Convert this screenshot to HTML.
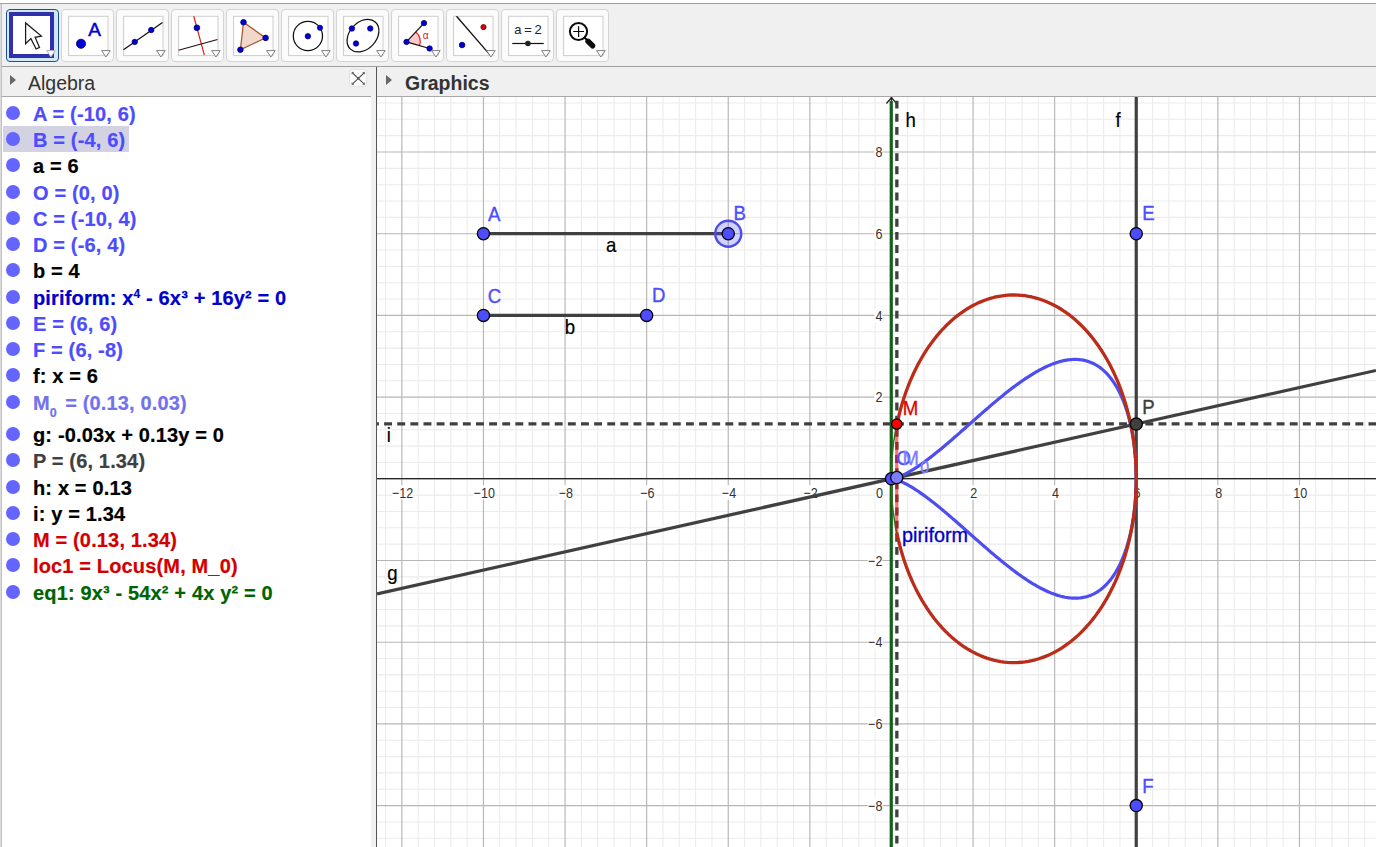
<!DOCTYPE html>
<html><head><meta charset="utf-8"><title>GeoGebra</title>
<style>
html,body{margin:0;padding:0;background:#fff;}
body{width:1376px;height:847px;position:relative;overflow:hidden;font-family:"Liberation Sans",sans-serif;}
.abs{position:absolute;}
#toolbar{left:0;top:3px;width:1376px;height:63px;background:#f0f0f0;border-top:1px solid #a0a0a0;box-sizing:border-box;}
#hdr{left:0;top:66px;width:1376px;height:31px;background:#f0f0f0;border-top:1px solid #a0a0a0;border-bottom:1px solid #a8a8a8;box-sizing:border-box;}
.tbtn{position:absolute;top:9px;width:53px;height:53px;box-sizing:border-box;border:1px solid #d4d4d4;border-radius:4px;background:#fbfbfb;}
.tbtn svg{position:absolute;left:-1px;top:-1px;}
.tbtn.sel{border-color:#205088;background:#cfe8fc;}
#alg{left:0;top:97px;width:371px;height:750px;background:#fff;}
#leftedge{left:0;top:4px;width:2px;height:843px;background:linear-gradient(to right,#dadada 0,#dadada 1px,#c2c2c2 1px,#c2c2c2 2px);}
#split{left:371px;top:67px;width:5px;height:780px;background:#f0f0f0;}
#splitline{left:376px;top:67px;width:1px;height:780px;background:#555;}
.row{position:absolute;left:3px;height:26px;line-height:26px;font-weight:bold;font-size:20px;letter-spacing:0.15px;-webkit-text-stroke:0.2px;white-space:nowrap;padding-right:3.6px;}
.row i{position:absolute;left:3px;top:6px;width:14px;height:14px;border-radius:50%;background:#6464ff;}
.row span{margin-left:30px;position:relative;top:0.6px;}
.row.sel{background:#d2d2e2;}
.row sup{font-size:12px;vertical-align:baseline;position:relative;top:-7px;}
.row sub{font-size:13px;vertical-align:baseline;position:relative;top:7.5px;font-weight:bold;font-size:12.5px;margin-right:2.5px;}
.ttl{position:absolute;top:71px;font-size:19.5px;line-height:24px;color:#333;}
.arrow{position:absolute;width:0;height:0;border-left:6px solid #686868;border-top:5.75px solid transparent;border-bottom:5.75px solid transparent;}
#close{left:349px;top:69px;width:17px;height:17px;border:1px solid #c8c8c8;border-radius:3px;background:#fafafa;box-sizing:border-box;}
</style></head><body>
<div id="toolbar" class="abs"></div>
<div class="tbtn sel" style="left:6px"><svg width="52" height="52" viewBox="0 0 52 52"><rect x="5" y="5" width="41" height="42" fill="#fff" stroke="#3030aa" stroke-width="4"/><path d="M19.6 13.9L19.6 34.8L24.9 29.6L30.1 40L33.5 38.4L29.1 28.3L35.4 27.1Z" fill="#fff" stroke="#1c1c1c" stroke-width="1.25" stroke-linejoin="miter"/><path d="M40.6 41.6h8.6l-4.3 6.4z" fill="#fff" stroke="#b0b0c8" stroke-width="1"/></svg></div>
<div class="tbtn" style="left:61px"><svg width="52" height="52" viewBox="0 0 52 52"><rect x="7.6" y="7.3" width="39.4" height="39.3" fill="#fff" stroke="#cdcdcd" stroke-width="1"/><circle cx="20" cy="34.75" r="4.6" fill="#0000d6" stroke="#000070" stroke-width="0.8"/><text x="27.3" y="27" font-size="19" fill="#0000d6" stroke="#0000d6" stroke-width="0.5" font-family="Liberation Sans, sans-serif">A</text><path d="M40.6 41.6h8.6l-4.3 6.4z" fill="#fff" stroke="#808080" stroke-width="1"/></svg></div>
<div class="tbtn" style="left:116px"><svg width="52" height="52" viewBox="0 0 52 52"><rect x="7.6" y="7.3" width="39.4" height="39.3" fill="#fff" stroke="#cdcdcd" stroke-width="1"/><path d="M7.5 40.75L46.5 13.5" stroke="#111" stroke-width="1.25"/><circle cx="18.75" cy="32.9" r="2.7" fill="#0000d6" stroke="#000070" stroke-width="0.8"/><circle cx="35.25" cy="21" r="2.7" fill="#0000d6" stroke="#000070" stroke-width="0.8"/><path d="M40.6 41.6h8.6l-4.3 6.4z" fill="#fff" stroke="#808080" stroke-width="1"/></svg></div>
<div class="tbtn" style="left:171px"><svg width="52" height="52" viewBox="0 0 52 52"><rect x="7.6" y="7.3" width="39.4" height="39.3" fill="#fff" stroke="#cdcdcd" stroke-width="1"/><path d="M22.75 7.25L33.4 46.2" stroke="#e02020" stroke-width="1.2"/><path d="M7.5 41.25L46.5 30.5" stroke="#2a1010" stroke-width="1.25"/><circle cx="25.9" cy="18.75" r="2.85" fill="#0000d6" stroke="#000070" stroke-width="0.8"/><path d="M40.6 41.6h8.6l-4.3 6.4z" fill="#fff" stroke="#808080" stroke-width="1"/></svg></div>
<div class="tbtn" style="left:226px"><svg width="52" height="52" viewBox="0 0 52 52"><rect x="7.6" y="7.3" width="39.4" height="39.3" fill="#fff" stroke="#cdcdcd" stroke-width="1"/><path d="M17.5 13.25L39.6 28.9L14.4 40.75Z" fill="#f0d8cc" stroke="#a85020" stroke-width="1.2"/><circle cx="17.5" cy="13.25" r="2.8000000000000003" fill="#0000d6" stroke="#000070" stroke-width="0.8"/><circle cx="39.6" cy="28.9" r="2.8000000000000003" fill="#0000d6" stroke="#000070" stroke-width="0.8"/><circle cx="14.4" cy="40.75" r="2.8000000000000003" fill="#0000d6" stroke="#000070" stroke-width="0.8"/><path d="M40.6 41.6h8.6l-4.3 6.4z" fill="#fff" stroke="#808080" stroke-width="1"/></svg></div>
<div class="tbtn" style="left:281px"><svg width="52" height="52" viewBox="0 0 52 52"><rect x="7.6" y="7.3" width="39.4" height="39.3" fill="#fff" stroke="#cdcdcd" stroke-width="1"/><circle cx="26.9" cy="27" r="14.6" fill="none" stroke="#111" stroke-width="1.25"/><circle cx="26.9" cy="27.25" r="2.7" fill="#0000d6" stroke="#000070" stroke-width="0.8"/><circle cx="39" cy="18.75" r="2.6" fill="#0000d6" stroke="#000070" stroke-width="0.8"/><path d="M40.6 41.6h8.6l-4.3 6.4z" fill="#fff" stroke="#808080" stroke-width="1"/></svg></div>
<div class="tbtn" style="left:336px"><svg width="52" height="52" viewBox="0 0 52 52"><rect x="7.6" y="7.3" width="39.4" height="39.3" fill="#fff" stroke="#cdcdcd" stroke-width="1"/><ellipse cx="27" cy="26.7" rx="18.4" ry="13.4" transform="rotate(-47 27 26.7)" fill="none" stroke="#111" stroke-width="1.25"/><circle cx="15.9" cy="19.5" r="2.7" fill="#0000d6" stroke="#000070" stroke-width="0.8"/><circle cx="34.25" cy="19.5" r="2.7" fill="#0000d6" stroke="#000070" stroke-width="0.8"/><circle cx="20" cy="34.5" r="2.7" fill="#0000d6" stroke="#000070" stroke-width="0.8"/><path d="M40.6 41.6h8.6l-4.3 6.4z" fill="#fff" stroke="#808080" stroke-width="1"/></svg></div>
<div class="tbtn" style="left:391px"><svg width="52" height="52" viewBox="0 0 52 52"><rect x="7.6" y="7.3" width="39.4" height="39.3" fill="#fff" stroke="#cdcdcd" stroke-width="1"/><path d="M15.5 32.9L24.8 22.9A13.6 13.6 0 0 1 28.6 36.7Z" fill="#ffc8c8" stroke="none"/><path d="M24.8 22.9A13.6 13.6 0 0 1 28.6 36.7" fill="none" stroke="#e02020" stroke-width="1.2"/><path d="M33 14.1L15.5 32.9L38.6 39.5" fill="none" stroke="#111" stroke-width="1.25"/><circle cx="33" cy="14.1" r="2.7" fill="#0000d6" stroke="#000070" stroke-width="0.8"/><circle cx="15.5" cy="32.9" r="2.7" fill="#0000d6" stroke="#000070" stroke-width="0.8"/><circle cx="38.6" cy="39.5" r="2.7" fill="#0000d6" stroke="#000070" stroke-width="0.8"/><text x="31.8" y="30.4" font-size="10.3" fill="#e02020" font-family="Liberation Sans, sans-serif">α</text><path d="M40.6 41.6h8.6l-4.3 6.4z" fill="#fff" stroke="#808080" stroke-width="1"/></svg></div>
<div class="tbtn" style="left:446px"><svg width="52" height="52" viewBox="0 0 52 52"><rect x="7.6" y="7.3" width="39.4" height="39.3" fill="#fff" stroke="#cdcdcd" stroke-width="1"/><path d="M10.5 7.25L44.6 46.6" stroke="#111" stroke-width="1.3"/><circle cx="37.5" cy="18.1" r="2.6" fill="#e00000" stroke="#600000" stroke-width="0.8"/><circle cx="16.1" cy="36" r="2.8000000000000003" fill="#0000d6" stroke="#000070" stroke-width="0.8"/><path d="M40.6 41.6h8.6l-4.3 6.4z" fill="#fff" stroke="#808080" stroke-width="1"/></svg></div>
<div class="tbtn" style="left:501px"><svg width="52" height="52" viewBox="0 0 52 52"><rect x="7.6" y="7.3" width="39.4" height="39.3" fill="#fff" stroke="#cdcdcd" stroke-width="1"/><text x="13.2" y="25" font-size="13" fill="#222" word-spacing="-0.9" font-family="Liberation Sans, sans-serif">a = 2</text><path d="M11.25 34.5H42.75" stroke="#111" stroke-width="1.2"/><circle cx="26.9" cy="34.5" r="2.8" fill="#222"/><path d="M40.6 41.6h8.6l-4.3 6.4z" fill="#fff" stroke="#808080" stroke-width="1"/></svg></div>
<div class="tbtn" style="left:556px"><svg width="52" height="52" viewBox="0 0 52 52"><rect x="7.6" y="7.3" width="39.4" height="39.3" fill="#fff" stroke="#cdcdcd" stroke-width="1"/><circle cx="22.5" cy="22.5" r="8.6" fill="none" stroke="#0a0a0a" stroke-width="2"/><path d="M17.2 22.5h10.8M22.6 17.2v10.7" stroke="#0a0a0a" stroke-width="1.2"/><path d="M28.5 28.5L33 33" stroke="#0a0a0a" stroke-width="2"/><path d="M32 32.3L36.6 36.8" stroke="#0a0a0a" stroke-width="5.4" stroke-linecap="round"/><path d="M40.6 41.6h8.6l-4.3 6.4z" fill="#fff" stroke="#808080" stroke-width="1"/></svg></div>
<div id="hdr" class="abs"></div>
<div class="arrow" style="left:10px;top:75px"></div>
<div class="ttl" style="left:28px">Algebra</div>
<svg class="abs" style="left:348px;top:68px" width="20" height="20" viewBox="0 0 20 20"><rect x="1.6" y="1.4" width="17" height="17" rx="3.2" fill="#fcfcfc" stroke="#dcdcdc" stroke-width="0.8"/><path d="M4.1 4.5L16.5 16.3M16.5 4.5L4.1 16.3" stroke="#555" stroke-width="1.1"/><path d="M4 6.2V4.4H5.9M14.7 4.4H16.6V6.2M4 14.6V16.4H5.9M14.7 16.4H16.6V14.6" stroke="#666" stroke-width="0.9" fill="none"/><rect x="9.2" y="9.3" width="2.2" height="2.2" fill="#555"/></svg>
<div class="arrow" style="left:386px;top:75.3px;border-top-width:5.8px;border-bottom-width:5.8px"></div>
<div class="ttl" style="left:405px;font-weight:bold">Graphics</div>
<div id="alg" class="abs"></div>
<div class="row" style="top:100px;color:#4d4dff"><i></i><span>A = (-10, 6)</span></div>
<div class="row sel" style="top:126px;color:#4d4dff"><i></i><span>B = (-4, 6)</span></div>
<div class="row" style="top:152px;color:#000"><i></i><span>a = 6</span></div>
<div class="row" style="top:179px;color:#4d4dff"><i></i><span>O = (0, 0)</span></div>
<div class="row" style="top:205px;color:#4d4dff"><i></i><span>C = (-10, 4)</span></div>
<div class="row" style="top:231px;color:#4d4dff"><i></i><span>D = (-6, 4)</span></div>
<div class="row" style="top:257px;color:#000"><i></i><span>b = 4</span></div>
<div class="row" style="top:284px;color:#0000cc"><i></i><span>piriform: x<sup>4</sup> - 6x³ + 16y² = 0</span></div>
<div class="row" style="top:310px;color:#4d4dff"><i></i><span>E = (6, 6)</span></div>
<div class="row" style="top:336px;color:#4d4dff"><i></i><span>F = (6, -8)</span></div>
<div class="row" style="top:362px;color:#000"><i></i><span>f: x = 6</span></div>
<div class="row" style="top:389px;color:#7272f0"><i></i><span>M<sub>0</sub> = (0.13, 0.03)</span></div>
<div class="row" style="top:421px;color:#000"><i></i><span>g: -0.03x + 0.13y = 0</span></div>
<div class="row" style="top:447px;color:#404040"><i></i><span>P = (6, 1.34)</span></div>
<div class="row" style="top:474px;color:#000"><i></i><span>h: x = 0.13</span></div>
<div class="row" style="top:500px;color:#000"><i></i><span>i: y = 1.34</span></div>
<div class="row" style="top:526px;color:#d20000"><i></i><span>M = (0.13, 1.34)</span></div>
<div class="row" style="top:552px;color:#d20000"><i></i><span>loc1 = Locus(M, M_0)</span></div>
<div class="row" style="top:579px;color:#006400"><i></i><span>eq1: 9x³ - 54x² + 4x y² = 0</span></div>
<div id="split" class="abs"></div>
<div id="splitline" class="abs"></div>
<div id="leftedge" class="abs"></div>
<svg width="999" height="750" viewBox="0 0 999 750" style="position:absolute;left:377px;top:97px" font-family="Liberation Sans, sans-serif"><path d="M8.53 0V750M41.17 0V750M57.49 0V750M73.81 0V750M90.13 0V750M122.77 0V750M139.09 0V750M155.41 0V750M171.73 0V750M204.37 0V750M220.69 0V750M237.01 0V750M253.33 0V750M285.97 0V750M302.29 0V750M318.61 0V750M334.93 0V750M367.57 0V750M383.89 0V750M400.21 0V750M416.53 0V750M449.17 0V750M465.49 0V750M481.81 0V750M498.13 0V750M530.77 0V750M547.09 0V750M563.41 0V750M579.73 0V750M612.37 0V750M628.69 0V750M645.01 0V750M661.33 0V750M693.97 0V750M710.29 0V750M726.61 0V750M742.93 0V750M775.57 0V750M791.89 0V750M808.21 0V750M824.53 0V750M857.17 0V750M873.49 0V750M889.81 0V750M906.13 0V750M938.77 0V750M955.09 0V750M971.41 0V750M987.73 0V750M0 5.98H999M0 22.32H999M0 38.66H999M0 71.34H999M0 87.68H999M0 104.02H999M0 120.36H999M0 153.04H999M0 169.38H999M0 185.72H999M0 202.06H999M0 234.74H999M0 251.08H999M0 267.42H999M0 283.76H999M0 316.44H999M0 332.78H999M0 349.12H999M0 365.46H999M0 398.14H999M0 414.48H999M0 430.82H999M0 447.16H999M0 479.84H999M0 496.18H999M0 512.52H999M0 528.86H999M0 561.54H999M0 577.88H999M0 594.22H999M0 610.56H999M0 643.24H999M0 659.58H999M0 675.92H999M0 692.26H999M0 724.94H999M0 741.28H999" stroke="#ececec" stroke-width="1.1" fill="none"/>
<path d="M24.85 0V750M106.45 0V750M188.05 0V750M269.65 0V750M351.25 0V750M432.85 0V750M514.45 0V750M596.05 0V750M677.65 0V750M759.25 0V750M840.85 0V750M922.45 0V750M0 55H999M0 136.7H999M0 218.4H999M0 300.1H999M0 381.8H999M0 463.5H999M0 545.2H999M0 626.9H999M0 708.6H999" stroke="#b6b6b6" stroke-width="1.15" fill="none"/>
<path d="M0 381.6H999" stroke="#252525" stroke-width="1.3" fill="none"/>
<path d="M514.45 0V750" stroke="#252525" stroke-width="1.3" fill="none"/>
<path d="M509.45 6.5L514.45 0.5L519.45 6.5" stroke="#252525" stroke-width="1.3" fill="none"/>
<g font-size="14.8" fill="#333">
<rect x="15" y="388.2" width="21.3" height="14.5" fill="#fff"/>
<text x="30.18" y="400.7" text-anchor="middle" transform="scale(0.85 1)">−12</text>
<rect x="96.6" y="388.2" width="21.3" height="14.5" fill="#fff"/>
<text x="126.18" y="400.7" text-anchor="middle" transform="scale(0.85 1)">−10</text>
<rect x="181.5" y="388.2" width="14.7" height="14.5" fill="#fff"/>
<text x="222.18" y="400.7" text-anchor="middle" transform="scale(0.85 1)">−8</text>
<rect x="263.1" y="388.2" width="14.7" height="14.5" fill="#fff"/>
<text x="318.18" y="400.7" text-anchor="middle" transform="scale(0.85 1)">−6</text>
<rect x="344.7" y="388.2" width="14.7" height="14.5" fill="#fff"/>
<text x="414.18" y="400.7" text-anchor="middle" transform="scale(0.85 1)">−4</text>
<rect x="426.3" y="388.2" width="14.7" height="14.5" fill="#fff"/>
<text x="510.18" y="400.7" text-anchor="middle" transform="scale(0.85 1)">−2</text>
<rect x="592.8" y="388.2" width="8.1" height="14.5" fill="#fff"/>
<text x="702.18" y="400.7" text-anchor="middle" transform="scale(0.85 1)">2</text>
<rect x="674.4" y="388.2" width="8.1" height="14.5" fill="#fff"/>
<text x="798.18" y="400.7" text-anchor="middle" transform="scale(0.85 1)">4</text>
<rect x="756" y="388.2" width="8.1" height="14.5" fill="#fff"/>
<text x="894.18" y="400.7" text-anchor="middle" transform="scale(0.85 1)">6</text>
<rect x="837.6" y="388.2" width="8.1" height="14.5" fill="#fff"/>
<text x="990.18" y="400.7" text-anchor="middle" transform="scale(0.85 1)">8</text>
<rect x="915.9" y="388.2" width="14.7" height="14.5" fill="#fff"/>
<text x="1086.18" y="400.7" text-anchor="middle" transform="scale(0.85 1)">10</text>
<rect x="498.4" y="388.2" width="8.1" height="14.5" fill="#fff"/>
<text x="591.12" y="400.7" text-anchor="middle" transform="scale(0.85 1)">0</text>
<rect x="490.75" y="701.4" width="14.7" height="14.5" fill="#fff"/>
<text x="594.65" y="713.9" text-anchor="end" transform="scale(0.85 1)">−8</text>
<rect x="490.75" y="619.7" width="14.7" height="14.5" fill="#fff"/>
<text x="594.65" y="632.2" text-anchor="end" transform="scale(0.85 1)">−6</text>
<rect x="490.75" y="538" width="14.7" height="14.5" fill="#fff"/>
<text x="594.65" y="550.5" text-anchor="end" transform="scale(0.85 1)">−4</text>
<rect x="490.75" y="456.3" width="14.7" height="14.5" fill="#fff"/>
<text x="594.65" y="468.8" text-anchor="end" transform="scale(0.85 1)">−2</text>
<rect x="497.35" y="292.9" width="8.1" height="14.5" fill="#fff"/>
<text x="594.65" y="305.4" text-anchor="end" transform="scale(0.85 1)">2</text>
<rect x="497.35" y="211.2" width="8.1" height="14.5" fill="#fff"/>
<text x="594.65" y="223.7" text-anchor="end" transform="scale(0.85 1)">4</text>
<rect x="497.35" y="129.5" width="8.1" height="14.5" fill="#fff"/>
<text x="594.65" y="142" text-anchor="end" transform="scale(0.85 1)">6</text>
<rect x="497.35" y="47.8" width="8.1" height="14.5" fill="#fff"/>
<text x="594.65" y="60.3" text-anchor="end" transform="scale(0.85 1)">8</text>
</g>
<path d="M106.45 136.7H351.25 M106.45 218.4H269.65" stroke="#404040" stroke-width="3.2" fill="none"/>
<path d="M759.25 0V750" stroke="#404040" stroke-width="3.2" fill="none"/>
<path d="M0 496.83L999 273.45" stroke="#404040" stroke-width="3.2" fill="none"/>
<path d="M519.85 0V750" stroke="#404040" stroke-width="3.3" stroke-dasharray="7.9 5.225" stroke-dashoffset="9.42" fill="none"/>
<path d="M0 326.86H999" stroke="#404040" stroke-width="3.3" stroke-dasharray="7.9 5.225" stroke-dashoffset="6" fill="none"/>
<path d="M514.45 381.8L514.46 381.8L514.49 381.8L514.54 381.8L514.62 381.79L514.71 381.79L514.83 381.78L514.96 381.76L515.12 381.75L515.3 381.73L515.5 381.7L515.72 381.66L515.96 381.62L516.22 381.58L516.5 381.52L516.8 381.46L517.12 381.38L517.47 381.3L517.83 381.21L518.22 381.1L518.62 380.99L519.05 380.86L519.49 380.73L519.96 380.57L520.44 380.41L520.95 380.23L521.47 380.04L522.02 379.83L522.58 379.61L523.16 379.38L523.77 379.12L524.39 378.85L525.03 378.57L525.69 378.27L526.37 377.95L527.07 377.61L527.79 377.25L528.53 376.88L529.28 376.49L530.06 376.07L530.85 375.64L531.66 375.19L532.49 374.72L533.33 374.23L534.2 373.72L535.08 373.19L535.98 372.64L536.89 372.07L537.83 371.48L538.78 370.87L539.74 370.24L540.73 369.58L541.73 368.91L542.74 368.21L543.78 367.5L544.82 366.76L545.89 366L546.97 365.22L548.06 364.42L549.17 363.6L550.3 362.76L551.44 361.9L552.6 361.02L553.76 360.12L554.95 359.2L556.15 358.26L557.36 357.3L558.58 356.32L559.82 355.32L561.07 354.31L562.34 353.27L563.62 352.22L564.91 351.15L566.21 350.06L567.52 348.96L568.85 347.84L570.19 346.7L571.54 345.55L572.9 344.38L574.27 343.2L575.65 342L577.04 340.79L578.45 339.57L579.86 338.33L581.28 337.08L582.71 335.83L584.16 334.56L585.61 333.28L587.07 331.99L588.53 330.69L590.01 329.38L591.49 328.06L592.99 326.74L594.49 325.41L595.99 324.08L597.51 322.74L599.03 321.4L600.55 320.05L602.09 318.7L603.63 317.35L605.17 316L606.72 314.64L608.28 313.29L609.84 311.94L611.4 310.59L612.97 309.24L614.54 307.9L616.12 306.56L617.7 305.22L619.29 303.89L620.87 302.57L622.46 301.25L624.06 299.95L625.65 298.65L627.25 297.36L628.84 296.08L630.44 294.82L632.04 293.56L633.65 292.32L635.25 291.1L636.85 289.89L638.45 288.69L640.05 287.51L641.66 286.35L643.26 285.21L644.86 284.09L646.45 282.98L648.05 281.9L649.64 280.84L651.24 279.8L652.83 278.78L654.41 277.79L656 276.82L657.58 275.87L659.16 274.96L660.73 274.07L662.3 273.2L663.86 272.37L665.42 271.56L666.98 270.79L668.53 270.04L670.07 269.33L671.61 268.64L673.15 267.99L674.67 267.37L676.19 266.79L677.71 266.24L679.21 265.72L680.71 265.24L682.21 264.8L683.69 264.39L685.17 264.02L686.63 263.68L688.09 263.38L689.54 263.13L690.99 262.91L692.42 262.73L693.84 262.58L695.25 262.48L696.66 262.42L698.05 262.4L699.43 262.42L700.8 262.48L702.16 262.59L703.51 262.73L704.85 262.92L706.18 263.15L707.49 263.42L708.79 263.73L710.08 264.09L711.36 264.49L712.63 264.93L713.88 265.42L715.12 265.95L716.34 266.52L717.55 267.13L718.75 267.79L719.94 268.49L721.1 269.24L722.26 270.02L723.4 270.85L724.53 271.72L725.64 272.64L726.73 273.6L727.81 274.59L728.88 275.63L729.92 276.72L730.96 277.84L731.97 279.01L732.97 280.21L733.96 281.46L734.92 282.74L735.87 284.07L736.81 285.43L737.72 286.84L738.62 288.28L739.5 289.76L740.37 291.27L741.21 292.83L742.04 294.42L742.85 296.04L743.64 297.71L744.42 299.4L745.17 301.13L745.91 302.89L746.63 304.69L747.33 306.52L748.01 308.37L748.67 310.26L749.31 312.18L749.93 314.13L750.54 316.11L751.12 318.11L751.68 320.14L752.23 322.2L752.75 324.28L753.26 326.39L753.74 328.51L754.21 330.67L754.65 332.84L755.08 335.03L755.48 337.25L755.87 339.48L756.23 341.73L756.58 344L756.9 346.28L757.2 348.58L757.48 350.89L757.74 353.22L757.98 355.56L758.2 357.91L758.4 360.27L758.58 362.64L758.74 365.01L758.87 367.4L758.99 369.79L759.08 372.19L759.16 374.59L759.21 376.99L759.24 379.39L759.25 381.8L759.25 381.8L759.24 384.21L759.21 386.61L759.16 389.01L759.08 391.41L758.99 393.81L758.87 396.2L758.74 398.59L758.58 400.96L758.4 403.33L758.2 405.69L757.98 408.04L757.74 410.38L757.48 412.71L757.2 415.02L756.9 417.32L756.58 419.6L756.23 421.87L755.87 424.12L755.48 426.35L755.08 428.57L754.65 430.76L754.21 432.93L753.74 435.09L753.26 437.21L752.75 439.32L752.23 441.4L751.68 443.46L751.12 445.49L750.54 447.49L749.93 449.47L749.31 451.42L748.67 453.34L748.01 455.23L747.33 457.08L746.63 458.91L745.91 460.71L745.17 462.47L744.42 464.2L743.64 465.89L742.85 467.56L742.04 469.18L741.21 470.77L740.37 472.33L739.5 473.84L738.62 475.32L737.72 476.76L736.81 478.17L735.87 479.53L734.92 480.86L733.96 482.14L732.97 483.39L731.97 484.59L730.96 485.76L729.92 486.88L728.88 487.97L727.81 489.01L726.73 490L725.64 490.96L724.53 491.88L723.4 492.75L722.26 493.58L721.1 494.36L719.94 495.11L718.75 495.81L717.55 496.47L716.34 497.08L715.12 497.65L713.88 498.18L712.63 498.67L711.36 499.11L710.08 499.51L708.79 499.87L707.49 500.18L706.18 500.45L704.85 500.68L703.51 500.87L702.16 501.01L700.8 501.12L699.43 501.18L698.05 501.2L696.66 501.18L695.25 501.12L693.84 501.02L692.42 500.87L690.99 500.69L689.54 500.47L688.09 500.22L686.63 499.92L685.17 499.58L683.69 499.21L682.21 498.8L680.71 498.36L679.21 497.88L677.71 497.36L676.19 496.81L674.67 496.23L673.15 495.61L671.61 494.96L670.07 494.27L668.53 493.56L666.98 492.81L665.42 492.04L663.86 491.23L662.3 490.4L660.73 489.53L659.16 488.64L657.58 487.73L656 486.78L654.41 485.81L652.83 484.82L651.24 483.8L649.64 482.76L648.05 481.7L646.45 480.62L644.86 479.51L643.26 478.39L641.66 477.25L640.05 476.09L638.45 474.91L636.85 473.71L635.25 472.5L633.65 471.28L632.04 470.04L630.44 468.78L628.84 467.52L627.25 466.24L625.65 464.95L624.06 463.65L622.46 462.35L620.87 461.03L619.29 459.71L617.7 458.38L616.12 457.04L614.54 455.7L612.97 454.36L611.4 453.01L609.84 451.66L608.28 450.31L606.72 448.96L605.17 447.6L603.63 446.25L602.09 444.9L600.55 443.55L599.03 442.2L597.51 440.86L595.99 439.52L594.49 438.19L592.99 436.86L591.49 435.54L590.01 434.22L588.53 432.91L587.07 431.61L585.61 430.32L584.16 429.04L582.71 427.77L581.28 426.52L579.86 425.27L578.45 424.03L577.04 422.81L575.65 421.6L574.27 420.4L572.9 419.22L571.54 418.05L570.19 416.9L568.85 415.76L567.52 414.64L566.21 413.54L564.91 412.45L563.62 411.38L562.34 410.33L561.07 409.29L559.82 408.28L558.58 407.28L557.36 406.3L556.15 405.34L554.95 404.4L553.76 403.48L552.6 402.58L551.44 401.7L550.3 400.84L549.17 400L548.06 399.18L546.97 398.38L545.89 397.6L544.82 396.84L543.78 396.1L542.74 395.39L541.73 394.69L540.73 394.02L539.74 393.36L538.78 392.73L537.83 392.12L536.89 391.53L535.98 390.96L535.08 390.41L534.2 389.88L533.33 389.37L532.49 388.88L531.66 388.41L530.85 387.96L530.06 387.53L529.28 387.11L528.53 386.72L527.79 386.35L527.07 385.99L526.37 385.65L525.69 385.33L525.03 385.03L524.39 384.75L523.77 384.48L523.16 384.22L522.58 383.99L522.02 383.77L521.47 383.56L520.95 383.37L520.44 383.19L519.96 383.03L519.49 382.87L519.05 382.74L518.62 382.61L518.22 382.5L517.83 382.39L517.47 382.3L517.12 382.22L516.8 382.14L516.5 382.08L516.22 382.02L515.96 381.98L515.72 381.94L515.5 381.9L515.3 381.87L515.12 381.85L514.96 381.84L514.83 381.82L514.71 381.81L514.62 381.81L514.54 381.8L514.49 381.8L514.46 381.8L514.45 381.8Z" stroke="#4d4df0" stroke-width="3.2" fill="none" stroke-linejoin="round"/>
<path d="M514.25 4V750" stroke="#14601a" stroke-width="3.2" fill="none"/>
<ellipse cx="636.55" cy="381.8" rx="122.4" ry="183.83" stroke="#3a6a1c" stroke-width="1.5" fill="none"/>
<path d="M519.75 328.29L520.81 323.3L521.97 318.37L523.22 313.48L524.56 308.65L525.99 303.88L527.51 299.18L529.12 294.54L530.82 289.97L532.6 285.47L534.47 281.06L536.42 276.72L538.45 272.47L540.56 268.31L542.75 264.24L545.02 260.27L547.36 256.39L549.77 252.62L552.25 248.95L554.8 245.39L557.42 241.94L560.1 238.6L562.85 235.38L565.65 232.27L568.52 229.29L571.43 226.43L574.4 223.7L577.43 221.09L580.49 218.62L583.61 216.28L586.77 214.07L589.97 211.99L593.2 210.06L596.47 208.26L599.78 206.61L603.11 205.1L606.48 203.72L609.86 202.5L613.27 201.42L616.7 200.48L620.14 199.7L623.6 199.06L627.07 198.56L630.54 198.22L634.03 198.02L637.51 197.98L640.99 198.08L644.47 198.33L647.94 198.73L651.41 199.28L654.86 199.98L658.3 200.82L661.72 201.81L665.12 202.95L668.5 204.23L671.85 205.65L675.17 207.22L678.47 208.93L681.73 210.78L684.95 212.76L688.13 214.89L691.27 217.15L694.37 219.54L697.42 222.06L700.43 224.72L703.38 227.5L706.27 230.4L709.11 233.43L711.9 236.58L714.62 239.85L717.28 243.23L719.87 246.72L722.4 250.32L724.85 254.03L727.24 257.85L729.55 261.76L731.79 265.77L733.95 269.88L736.03 274.07L738.03 278.35L739.95 282.72L741.78 287.17L743.54 291.69L745.2 296.29L746.78 300.95L748.26 305.68L749.66 310.47L750.97 315.32L752.18 320.23L753.3 325.18L754.33 330.18L755.26 335.22L756.09 340.3L756.83 345.42L757.47 350.56L758.01 355.73L758.46 360.92L758.8 366.12L759.05 371.34L759.2 376.57L759.25 381.8L759.2 387.03L759.05 392.26L758.8 397.48L758.46 402.68L758.01 407.87L757.47 413.04L756.83 418.18L756.09 423.3L755.26 428.38L754.33 433.42L753.3 438.42L752.18 443.37L750.97 448.28L749.66 453.13L748.26 457.92L746.78 462.65L745.2 467.31L743.54 471.91L741.78 476.43L739.95 480.88L738.03 485.25L736.03 489.53L733.95 493.72L731.79 497.83L729.55 501.84L727.24 505.75L724.85 509.57L722.4 513.28L719.87 516.88L717.28 520.37L714.62 523.75L711.9 527.02L709.11 530.17L706.27 533.2L703.38 536.1L700.43 538.88L697.42 541.54L694.37 544.06L691.27 546.45L688.13 548.71L684.95 550.84L681.73 552.82L678.47 554.67L675.17 556.38L671.85 557.95L668.5 559.37L665.12 560.65L661.72 561.79L658.3 562.78L654.86 563.62L651.41 564.32L647.94 564.87L644.47 565.27L640.99 565.52L637.51 565.62L634.03 565.58L630.54 565.38L627.07 565.04L623.6 564.54L620.14 563.9L616.7 563.12L613.27 562.18L609.86 561.1L606.48 559.88L603.11 558.5L599.78 556.99L596.47 555.34L593.2 553.54L589.97 551.61L586.77 549.53L583.61 547.32L580.49 544.98L577.43 542.51L574.4 539.9L571.43 537.17L568.52 534.31L565.65 531.33L562.85 528.22L560.1 525L557.42 521.66L554.8 518.21L552.25 514.65L549.77 510.98L547.36 507.21L545.02 503.33L542.75 499.36L540.56 495.29L538.45 491.13L536.42 486.88L534.47 482.54L532.6 478.13L530.82 473.63L529.12 469.06L527.51 464.42L525.99 459.72L524.56 454.95L523.22 450.12L521.97 445.23L520.81 440.3L519.75 435.31" stroke="#bb2d1b" stroke-width="3.3" fill="none" stroke-linejoin="round"/>
<path d="M519.75 328.29V435.31" stroke="#f01010" stroke-opacity="0.58" stroke-width="3.2" fill="none"/>
<circle cx="351.25" cy="136.7" r="13" fill="#4d4dff" fill-opacity="0.25" stroke="#4d4de6" stroke-width="2.4"/>
<circle cx="106.45" cy="136.7" r="6.1" fill="#4d4dff" stroke="#000" stroke-width="1.3"/>
<circle cx="351.25" cy="136.7" r="6.1" fill="#4d4dff" stroke="#000" stroke-width="1.3"/>
<circle cx="106.45" cy="218.4" r="6.1" fill="#4d4dff" stroke="#000" stroke-width="1.3"/>
<circle cx="269.65" cy="218.4" r="6.1" fill="#4d4dff" stroke="#000" stroke-width="1.3"/>
<circle cx="759.25" cy="136.7" r="6.1" fill="#4d4dff" stroke="#000" stroke-width="1.3"/>
<circle cx="759.25" cy="708.6" r="6.1" fill="#4d4dff" stroke="#000" stroke-width="1.3"/>
<circle cx="759.25" cy="327.06" r="6.1" fill="#404040" stroke="#000" stroke-width="1.3"/>
<circle cx="514.45" cy="381.8" r="6.1" fill="#4d4dff" stroke="#000" stroke-width="1.3"/>
<circle cx="519.75" cy="380.57" r="6.1" fill="#7d7dff" stroke="#000" stroke-width="1.3"/>
<circle cx="519.75" cy="327.06" r="5.2" fill="#ff0000" stroke="#000" stroke-width="1.3"/>
<text transform="translate(111 123.8) scale(0.94 1.03)" fill="#4d4dff" font-size="19.8" font-weight="normal" stroke="#4d4dff" stroke-width="0.35">A</text>
<text transform="translate(356.6 123.4) scale(0.94 1.03)" fill="#4d4dff" font-size="19.8" font-weight="normal" stroke="#4d4dff" stroke-width="0.35">B</text>
<text transform="translate(110.8 205.5) scale(0.94 1.03)" fill="#4d4dff" font-size="19.8" font-weight="normal" stroke="#4d4dff" stroke-width="0.35">C</text>
<text transform="translate(275 205.2) scale(0.94 1.03)" fill="#4d4dff" font-size="19.8" font-weight="normal" stroke="#4d4dff" stroke-width="0.35">D</text>
<text transform="translate(765.3 123.4) scale(0.94 1.03)" fill="#4d4dff" font-size="19.8" font-weight="normal" stroke="#4d4dff" stroke-width="0.35">E</text>
<text transform="translate(765.3 695.8) scale(0.94 1.03)" fill="#4d4dff" font-size="19.8" font-weight="normal" stroke="#4d4dff" stroke-width="0.35">F</text>
<text transform="translate(765.3 317.4) scale(0.94 1.03)" fill="#404040" font-size="19.8" font-weight="normal" stroke="#404040" stroke-width="0.35">P</text>
<text transform="translate(229 155) scale(0.94 1.03)" fill="#000" font-size="19.8" font-weight="normal" stroke="#000" stroke-width="0.2">a</text>
<text transform="translate(187.8 237.4) scale(0.94 1.03)" fill="#000" font-size="19.8" font-weight="normal" stroke="#000" stroke-width="0.2">b</text>
<text transform="translate(528.4 29.9) scale(0.94 1.03)" fill="#000" font-size="19.8" font-weight="normal" stroke="#000" stroke-width="0.2">h</text>
<text transform="translate(738.6 29.6) scale(0.94 1.03)" fill="#000" font-size="19.8" font-weight="normal" stroke="#000" stroke-width="0.2">f</text>
<text transform="translate(9.7 345.4) scale(0.94 1.03)" fill="#000" font-size="19.8" font-weight="normal" stroke="#000" stroke-width="0.2">i</text>
<text transform="translate(10.2 483.4) scale(0.94 1.03)" fill="#000" font-size="19.8" font-weight="normal" stroke="#000" stroke-width="0.2">g</text>
<text transform="translate(525.8 317.5) scale(0.94 1.03)" fill="#e00000" font-size="19.8" font-weight="normal" stroke="#e00000" stroke-width="0.35">M</text>
<text transform="translate(519.4 367.6) scale(0.94 1.03)" fill="#4d4dff" font-size="19.8" font-weight="normal" stroke="#4d4dff" stroke-width="0.35">O</text>
<text transform="translate(525.6 367.6) scale(1 1.02)" fill="#7d7dff" font-size="19.8" font-weight="normal" stroke="#7d7dff" stroke-width="0.35">M<tspan dy="8" dx="1.2" font-size="16">0</tspan></text>
<text transform="translate(525 444.5) scale(1 1.02)" fill="#0000c8" font-size="19.8" font-weight="normal" stroke="#0000c8" stroke-width="0.35">piriform</text></svg>
</body></html>
